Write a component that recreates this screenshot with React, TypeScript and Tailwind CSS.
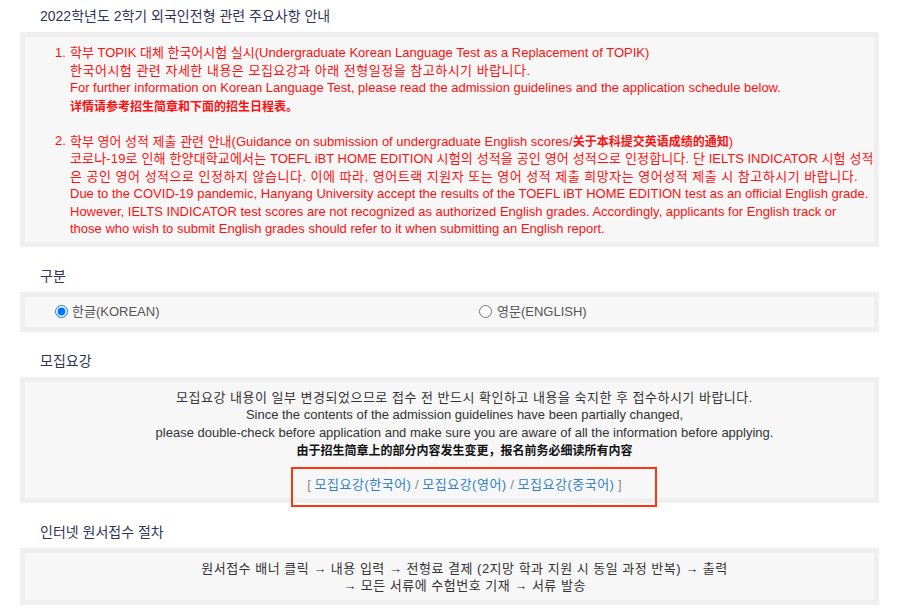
const FONT = { fontFamily: '"Liberation Sans", "Noto Sans CJK KR", sans-serif' }

function Heading({ children }: { children: React.ReactNode }) {
  return (
    <h2 className="pl-[40px] pt-[6px] pb-[6px] text-[14px] leading-[20px] font-normal text-[#2f3559]">
      {children}
    </h2>
  )
}

function Box({ children, className = '' }: { children: React.ReactNode; className?: string }) {
  return (
    <div className={'ml-[20px] mr-[21px] border-[5px] border-[#efefef] bg-[#f7f7f7] ' + className}>
      {children}
    </div>
  )
}

// Korean runs are set slightly wider to match the original Dotum spacing
function K({ children }: { children: React.ReactNode }) {
  return <span className="tracking-[0.5px]">{children}</span>
}

const zh = 'font-["Noto_Sans_CJK_SC",sans-serif] text-[12px] font-bold'

export default function App() {
  return (
    <div className="w-[900px] h-[612px] overflow-hidden bg-white" style={FONT}>
      {/* 주요사항 안내 */}
      <Heading>2022학년도 2학기 외국인전형 관련 주요사항 안내</Heading>
      <Box className="pl-[30px] pt-[7px] pb-[4px] text-[13px] leading-[17.5px] text-[#ff1010] whitespace-nowrap">
        <div className="flex">
          <span className="w-[15px] shrink-0">1.</span>
          <div>
            <div>학부 TOPIK 대체 한국어시험 실시(Undergraduate Korean Language Test as a Replacement of TOPIK)</div>
            <div className="tracking-[0.5px]">한국어시험 관련 자세한 내용은 모집요강과 아래 전형일정을 참고하시기 바랍니다.</div>
            <div>For further information on Korean Language Test, please read the admission guidelines and the application schedule below.</div>
            <div className={zh}>详情请参考招生简章和下面的招生日程表。</div>
          </div>
        </div>
        <div className="h-[17.5px]" />
        <div className="flex">
          <span className="w-[15px] shrink-0">2.</span>
          <div>
            <div>
              학부 영어 성적 제출 관련 안내(Guidance on submission of undergraduate English scores/
              <span className={zh}>关于本科提交英语成绩的通知</span>)
            </div>
            <div>
              <span className="tracking-[0.15px]">코로나-19로 인해 한양대학교에서는</span> TOEFL iBT HOME EDITION{' '}
              <span className="tracking-[0.15px]">시험의 성적을 공인 영어 성적으로 인정합니다. 단</span> IELTS INDICATOR{' '}
              <span className="tracking-[0.15px]">시험 성적</span>
            </div>
            <div className="tracking-[0.5px]">은 공인 영어 성적으로 인정하지 않습니다. 이에 따라, 영어트랙 지원자 또는 영어 성적 제출 희망자는 영어성적 제출 시 참고하시기 바랍니다.</div>
            <div>Due to the COVID-19 pandemic, Hanyang University accept the results of the TOEFL iBT HOME EDITION test as an official English grade.</div>
            <div>However, IELTS INDICATOR test scores are not recognized as authorized English grades. Accordingly, applicants for English track or</div>
            <div>those who wish to submit English grades should refer to it when submitting an English report.</div>
          </div>
        </div>
      </Box>

      {/* 구분 */}
      <div className="mt-[13px]">
        <Heading>구분</Heading>
        <Box className="pl-[30px] h-[40px] flex items-center text-[13px] text-[#555]">
          <label className="w-[424px] flex items-center gap-[4px]">
            <input type="radio" name="lang" defaultChecked className="m-0 w-[13px] h-[13px]" />
            <span>한글(KOREAN)</span>
          </label>
          <label className="flex items-center gap-[5px]">
            <input type="radio" name="lang" className="m-0 w-[13px] h-[13px]" />
            <span>영문(ENGLISH)</span>
          </label>
        </Box>
      </div>

      {/* 모집요강 */}
      <div className="mt-[13px] relative">
        <Heading>모집요강</Heading>
        <Box className="pl-[30px] pt-[7px] pb-[4px] text-center text-[13px] leading-[17.5px] text-[#333] whitespace-nowrap">
          <div className="tracking-[0.5px]">모집요강 내용이 일부 변경되었으므로 접수 전 반드시 확인하고 내용을 숙지한 후 접수하시기 바랍니다.</div>
          <div>Since the contents of the admission guidelines have been partially changed,</div>
          <div>please double-check before application and make sure you are aware of all the information before applying.</div>
          <div className={zh + ' text-[#111]'}>由于招生简章上的部分内容发生变更，报名前务必细读所有内容</div>
          <div className="h-[17.5px]" />
          <div className="text-[#888]">
            [ <a className="text-[#2f80c4]"><K>모집요강(한국어)</K></a> / <a className="text-[#2f80c4]"><K>모집요강(영어)</K></a> /{' '}
            <a className="text-[#2f80c4]"><K>모집요강(중국어)</K></a> ]
          </div>
        </Box>
        {/* highlight box drawn over the links */}
        <div className="absolute left-[291px] top-[122px] w-[366px] h-[40px] border-2 border-[#ff3414] pointer-events-none" />
      </div>

      {/* 인터넷 원서접수 절차 */}
      <div className="mt-[13px]">
        <Heading>인터넷 원서접수 절차</Heading>
        <Box className="pl-[30px] pt-[7px] pb-[5px] text-center text-[13px] leading-[17.5px] text-[#333] whitespace-nowrap">
          <div className="tracking-[0.5px]">원서접수 배너 클릭 → 내용 입력 → 전형료 결제 (2지망 학과 지원 시 동일 과정 반복) → 출력</div>
          <div className="tracking-[0.5px]">→ 모든 서류에 수험번호 기재 → 서류 발송</div>
        </Box>
      </div>
    </div>
  )
}
